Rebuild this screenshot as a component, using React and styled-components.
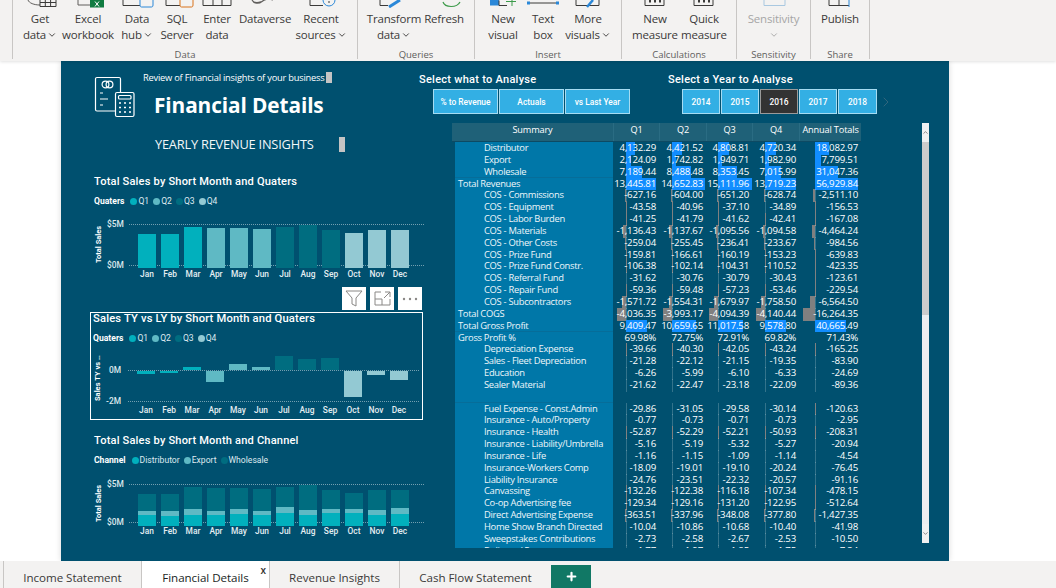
import React from "react"
import styled, { createGlobalStyle } from "styled-components"
import { ChevronDown, ChevronRight, ChevronUp, Plus } from "lucide-react"

const UI_FONT = `"Open Sans", "Noto Sans", "Liberation Sans", sans-serif`
const DIN_FONT = `Roboto, "Liberation Sans", sans-serif`

const GlobalStyle = createGlobalStyle`
  html, body { margin: 0; padding: 0; background: #fff; overflow: hidden; }
  body { font-family: ${UI_FONT}; }
  * { box-sizing: border-box; }
`

const Page = styled.div`
  width: 1056px;
  height: 588px;
  display: flex;
  flex-direction: column;
  overflow: hidden;
`

/* ribbon */
const Ribbon = styled.header`
  height: 61px;
  flex: none;
  display: flex;
  padding-left: 12px;
  background: #f3f2f1;
  box-shadow: 0 1px 3px rgba(0, 0, 0, 0.12);
  position: relative;
  z-index: 2;
`
const Group = styled.section`
  width: ${(p) => p.$w}px;
  height: 59px;
  flex: none;
  display: flex;
  flex-direction: column;
  border-right: 1px solid #c8c6c4;
  border-left: ${(p) => (p.$first ? "1px solid #c8c6c4" : "none")};
`
const Items = styled.div`
  flex: 1;
  display: flex;
  padding-left: ${(p) => p.$pad}px;
`
const Item = styled.div`
  width: ${(p) => p.$w}px;
  flex: none;
  display: flex;
  flex-direction: column;
  align-items: center;
  position: relative;
  padding-top: 11px;
  font-size: 11.5px;
  line-height: 16px;
  letter-spacing: -0.2px;
  white-space: nowrap;
  color: ${(p) => (p.$off ? "#a6a6a6" : "#3b3a39")};
  svg.chev { margin-left: 1px; vertical-align: -1px; }
`
const TopIcon = styled.svg`
  position: absolute;
  top: 0;
  left: 50%;
  transform: translateX(-50%);
`
const GroupLabel = styled.div`
  text-align: center;
  font-size: 9.5px;
  line-height: 12px;
  margin-bottom: -2px;
  color: #605e5c;
`

const Chev = () => <ChevronDown className="chev" size={10} strokeWidth={2.2} />

const Glyph = ({ kind }) => {
  const line = "#605e5c"
  return (
    <TopIcon width="34" height="8" viewBox="0 0 34 8" fill="none" stroke={line} strokeWidth="1">
      {kind === "get" && (<><path d="M5 0c1 3 6 5 12 5" /><path d="M17 0v6.500h16V0M17 2.500h16M22.300 0v6.500M27.600 0v6.500" stroke="#3b3a39" /></>)}
      {kind === "excel" && (<><path d="M7 0v5h12" /><rect x="19" y="0" width="14" height="7.500" fill="#107c41" stroke="none" /><path d="M24 1.500l4 5M28 1.500l-4 5" stroke="#fff" /></>)}
      {kind === "hub" && (<><path d="M3 5.500h17M3 0v5.500" stroke="#3b3a39" /><path d="M20 0v5c0 2 1 2 2 2h9c1 0 2 0 2-2V0" stroke="#2b88d8" /></>)}
      {kind === "sql" && (<><path d="M6 0v5.500h14" stroke="#3b3a39" /><path d="M20 0v5c0 2 1 2 2 2h9c1 0 2 0 2-2V0" stroke="#d9731a" /></>)}
      {kind === "enter" && (<path d="M3 0v5.500h28V0M13 0v5.500M22 0v5.500" stroke="#3b3a39" />)}
      {kind === "verse" && (<path d="M4 0c2 4 7 4 10 1.500s8-2.500 11-1.500M4 0c3 5 8 2 10 1.500" strokeWidth="1.200" />)}
      {kind === "recent" && (<><path d="M6 0v5.500h13" stroke="#3b3a39" /><circle cx="25" cy="0" r="6" stroke="#2b88d8" /><path d="M24 2h2" stroke="#3b3a39" /></>)}
      {kind === "transform" && (<><path d="M3 0v5.500h8" stroke="#3b3a39" /><path d="M12 7l11-7" stroke="#2b88d8" strokeWidth="3" /></>)}
      {kind === "refresh" && (<path d="M16 2c2 6 14 6 17 0" stroke="#3d9b4a" strokeWidth="1.200" />)}
      {kind === "visual" && (<><rect x="4" y="0" width="9" height="5.500" fill="#2b88d8" stroke="none" /><path d="M13 .500v5h8" stroke="#3b3a39" /><path d="M26 0v6M20 1.500h10" stroke="#3d9b4a" /></>)}
      {kind === "textbox" && (<><path d="M2 3h30" stroke="#3b3a39" /><rect x="1" y="1.500" width="3" height="3" fill="#2b88d8" stroke="none" /><rect x="30" y="1.500" width="3" height="3" fill="#2b88d8" stroke="none" /></>)}
      {kind === "more" && (<><path d="M5 0v5.500h23V0" stroke="#3b3a39" /><path d="M16 7l6-7" stroke="#2b88d8" strokeWidth="2.500" /></>)}
      {kind === "measure" && (<><path d="M7 0v5.500h19V0" stroke="#3b3a39" /><path d="M11 0h2v2.500h-2zM16 0h2v2.500h-2zM21 0h2v2.500h-2z" fill="#3b3a39" stroke="none" /></>)}
      {kind === "sens" && (<path d="M7 0v5.500h21V0" stroke="#a9c8e0" />)}
      {kind === "publish" && (<><path d="M6 0v5.500h20M16 0v5.500" stroke="#3b3a39" /><path d="M26 0v7" stroke="#2b88d8" /></>)}
    </TopIcon>
  )
}

const ribbon = [
  { label: "Data", w: 346, first: true, pad: 3, items: [
    { w: 48, a: "Get", b: "data", chev: 1, icon: "get" },
    { w: 48, a: "Excel", b: "workbook", icon: "excel" },
    { w: 50, a: "Data", b: "hub", chev: 1, icon: "hub" },
    { w: 30, a: "SQL", b: "Server", icon: "sql" },
    { w: 50, a: "Enter", b: "data", icon: "enter" },
    { w: 46, a: "Dataverse", icon: "verse" },
    { w: 66, a: "Recent", b: "sources", chev: 1, icon: "recent" },
  ] },
  { label: "Queries", w: 117, pad: 12, items: [
    { w: 48, a: "Transform", b: "data", chev: 1, icon: "transform" },
    { w: 52, a: "Refresh", icon: "refresh" },
  ] },
  { label: "Insert", w: 147, pad: 8, items: [
    { w: 40, a: "New", b: "visual", icon: "visual" },
    { w: 40, a: "Text", b: "box", icon: "textbox" },
    { w: 50, a: "More", b: "visuals", chev: 1, icon: "more" },
  ] },
  { label: "Calculations", w: 115, pad: 10, items: [
    { w: 46, a: "New", b: "measure", icon: "measure" },
    { w: 52, a: "Quick", b: "measure", icon: "measure" },
  ] },
  { label: "Sensitivity", w: 74, pad: 0, items: [
    { w: 73, a: "Sensitivity", off: 1, chevOnly: 1, icon: "sens" },
  ] },
  { label: "Share", w: 59, pad: 0, items: [{ w: 58, a: "Publish", icon: "publish" }] },
]

/* report canvas */
const Workspace = styled.main`
  flex: 1;
  display: flex;
  padding-left: 61px;
  background: #fff;
`
const Canvas = styled.div`
  width: 888px;
  height: 500px;
  flex: none;
  display: grid;
  grid-template-columns: 370px 1fr;
  background: #00506f;
  color: #fff;
  box-shadow: 0 0 6px rgba(0, 0, 0, 0.15);
`
const LeftCol = styled.div`
  display: flex;
  flex-direction: column;
  padding-left: 29px;
`
const Brand = styled.div`
  height: 62px;
  display: flex;
  padding: 15px 0 0 4px;
`
const BrandText = styled.div`
  margin: -5px 0 0 7px;
  display: flex;
  flex-direction: column;
`
const Tagline = styled.div`
  display: flex;
  align-items: center;
  gap: 2px;
  height: 12px;
  font-size: 9.3px;
  letter-spacing: -0.22px;
  white-space: nowrap;
`
const Marker = styled.span`
  width: ${(p) => p.$w}px;
  height: ${(p) => p.$h}px;
  background: #c4c4c4;
  flex: none;
`
const Title = styled.h1`
  margin: 7px 0 0 11px;
  font-size: 20.8px;
  line-height: 30px;
  font-weight: 700;
  letter-spacing: -0.1px;
  white-space: nowrap;
`
const Insights = styled.div`
  height: 40px;
  display: flex;
  align-items: center;
  padding-left: 65px;
  margin-top: 1px;
  gap: 25px;
  font-size: 12.8px;
  letter-spacing: -0.2px;
  color: #f2f7f9;
`
const ChartBlock = styled.div`
  height: ${(p) => p.$h}px;
  flex: none;
  display: flex;
  flex-direction: column;
  padding: ${(p) => p.$pt}px 0 0 ${(p) => (p.$framed ? 2 : 4)}px;
  width: ${(p) => (p.$framed ? "333px" : "auto")};
  border: ${(p) => (p.$framed ? "1.5px solid #fff" : "none")};
`
const ChartTitle = styled.div`
  font-family: ${DIN_FONT};
  font-size: ${(p) => (p.$big ? 11.2 : 11.1)}px;
  font-weight: 500;
  line-height: 14px;
  letter-spacing: 0.17px;
  white-space: nowrap;
  margin-top: ${(p) => (p.$big ? "-1px" : "0")};
`
const Legend = styled.div`
  display: flex;
  align-items: center;
  margin-top: 6px;
  height: 12px;
  font-family: ${DIN_FONT};
  font-size: 8.6px;
  color: #dfeaef;
`
const LegendName = styled.span`
  font-weight: 700;
  color: #fff;
  margin-right: 6px;
`
const LegendItem = styled.span`
  display: flex;
  align-items: center;
  margin-right: 4px;
  &::before {
    content: "";
    width: 7px;
    height: 7px;
    border-radius: 50%;
    margin-right: 1px;
    background: ${(p) => p.$c};
  }
`
const Plot = styled.div`
  display: grid;
  grid-template-columns: 13px 22px 1fr;
  width: ${(p) => p.$w}px;
  margin-top: ${(p) => p.$mt}px;
`
const AxisName = styled.div`
  grid-row: 1;
  height: ${(p) => p.$h}px;
  writing-mode: vertical-rl;
  transform: rotate(180deg);
  text-align: center;
  font-family: ${DIN_FONT};
  font-size: 7.5px;
  font-weight: 700;
  white-space: nowrap;
  overflow: hidden;
`
const AxisTicks = styled.div`
  grid-row: 1;
  height: ${(p) => p.$h}px;
  margin-top: ${(p) => p.$mt || 0}px;
  display: flex;
  flex-direction: column;
  justify-content: space-between;
  font-family: ${DIN_FONT};
  font-size: 8.4px;
  font-weight: 500;
  color: #dce8ed;
  line-height: 0;
  text-align: right;
  padding-right: 7px;
`
const Bars = styled.div`
  grid-row: 1;
  height: ${(p) => p.$h}px;
  position: relative;
  display: grid;
  grid-template-columns: repeat(12, 23px);
  padding-left: 9px;
  border-top: ${(p) => (p.$noTop ? "none" : "1px dotted rgba(255, 255, 255, 0.45)")};
  border-bottom: 1px dotted rgba(255, 255, 255, 0.45);
`
const Slot = styled.div`
  width: 18px;
  position: relative;
  display: flex;
  flex-direction: column;
  justify-content: flex-end;
`
const Seg = styled.div`
  flex: none;
  background: ${(p) => p.$c};
`
const FloatBar = styled.div`
  position: absolute;
  left: 0;
  right: 0;
  background: ${(p) => p.$c};
`
const ZeroLine = styled.div`
  position: absolute;
  left: 0;
  right: 0;
  top: ${(p) => p.$top}px;
  border-top: 1px dotted rgba(255, 255, 255, 0.45);
`
const Months = styled.div`
  grid-column: 3;
  display: grid;
  grid-template-columns: repeat(12, 23px);
  padding-left: 8px;
  margin-top: 3px;
  font-family: ${DIN_FONT};
  font-size: 8.4px;
  font-weight: 500;
  color: #e4eef2;
  line-height: 10px;
  span { width: 20px; text-align: center; }
`
const VisualTools = styled.div`
  height: 25px;
  flex: none;
  display: flex;
  justify-content: flex-end;
  gap: 4px;
  padding-right: 1px;
  width: 333px;
`
const ToolBtn = styled.div`
  width: 24px;
  height: 23px;
  background: #fff;
  display: grid;
  place-items: center;
`
const RightCol = styled.div`
  display: flex;
  flex-direction: column;
  min-width: 0;
`
const Slicers = styled.div`
  height: 62px;
  display: flex;
`
const Slicer = styled.div`
  width: ${(p) => p.$w}px;
  padding-top: 11px;
  flex: none;
`
const SlicerTitle = styled.div`
  font-family: ${DIN_FONT};
  font-size: 11px;
  font-weight: 500;
  line-height: 14px;
  letter-spacing: 0.27px;
  white-space: nowrap;
  margin: 1px 0 0 ${(p) => p.$ml || 0}px;
`
const Buttons = styled.div`
  display: flex;
  align-items: center;
  gap: 1px;
  margin: 2px 0 0 ${(p) => p.$ml}px;
`
const Btn = styled.div`
  width: ${(p) => p.$w}px;
  height: 25px;
  flex: none;
  display: grid;
  place-items: center;
  font-family: ${DIN_FONT};
  font-weight: 500;
  font-size: 8.4px;
  color: #fff;
  background: ${(p) => (p.$on ? "#333333" : "#33afe4")};
  border: 1px solid ${(p) => (p.$on ? "#9a9a9a" : "#a6dcf2")};
`
const MatrixRow = styled.div`
  display: flex;
  align-items: flex-start;
  padding-left: 21px;
`
const Matrix = styled.div`
  width: 409px;
  flex: none;
`
const MatrixHead = styled.div`
  height: 19px;
  display: grid;
  grid-template-columns: 161px 46px 47px 46px 47px 62px;
  background: #1f6178;
  border-bottom: 1px solid #0d4a63;
  font-size: 9.2px;
  font-weight: 500;
  letter-spacing: -0.15px;
  text-align: center;
  span { line-height: 14px; }
  span + span { border-left: 1px solid #2a6c83; height: 18px; }
`
const MatrixBody = styled.div`
  margin-left: 3px;
  height: 406px;
  overflow: hidden;
  position: relative;
`
const Row = styled.div`
  height: 11.85px;
  display: grid;
  grid-template-columns: 158px 46px 47px 46px 47px 62px;
  font-size: 9.7px;
  letter-spacing: -0.22px;
  line-height: 11.8px;
  white-space: nowrap;
`
const RowLabel = styled.div`
  background: #0077a8;
  border-bottom: 1px solid #066d99;
  padding-left: ${(p) => (p.$indent ? 29 : 3)}px;
  font-size: 9.4px;
  letter-spacing: -0.3px;
  color: #eef6fa;
`
const Cell = styled.div`
  position: relative;
  text-align: right;
  padding-right: 3px;
`
const CellText = styled.span`
  position: relative;
`
const DataBar = styled.i`
  position: absolute;
  top: 0;
  bottom: 0;
  left: ${(p) => p.$base}px;
  background: ${(p) => (p.$neg ? "#808080" : "#118dff")};
`
const BaseTick = styled.i`
  position: absolute;
  top: 0;
  bottom: 0;
  width: 1px;
  left: ${(p) => p.$base}px;
  background: rgba(255, 255, 255, 0.2);
`
const ScrollBar = styled.div`
  width: 7px;
  height: 420px;
  flex: none;
  margin-left: 61px;
  display: flex;
  flex-direction: column;
  background: #eceef0;
  color: #444;
`
const ScrollBtn = styled.div`
  height: 19px;
  flex: none;
  display: grid;
  place-items: center;
  background: #f0f1f2;
`
const ScrollThumb = styled.div`
  height: 173px;
  flex: none;
  background: #cccccc;
`
const ScrollRest = styled.div`
  flex: 1;
`

/* tabs */
const TabBar = styled.nav`
  height: 27px;
  flex: none;
  display: flex;
  padding-left: 3px;
  background: #f3f2f1;
`
const Tab = styled.div`
  width: ${(p) => p.$w}px;
  display: flex;
  align-items: flex-end;
  justify-content: center;
  padding-bottom: 2px;
  position: relative;
  font-size: 11.6px;
  line-height: 17px;
  letter-spacing: -0.05px;
  color: ${(p) => (p.$on ? "#201f1e" : "#3b3a39")};
  background: ${(p) => (p.$on ? "#fff" : "transparent")};
  border-left: 1px solid #c8c6c4;
`
const TabClose = styled.span`
  position: absolute;
  top: 4px;
  right: 3px;
  font-size: 10px;
  line-height: 10px;
  font-weight: 600;
  color: #323130;
`
const AddTab = styled.div`
  width: 40px;
  margin-top: 4px;
  background: #117865;
  display: grid;
  place-items: center;
  color: #fff;
`

const Q1 = "#01b0bd"
const Q2 = "#5fb9c4"
const Q3 = "#006d80"
const Q4 = "#93c9d3"
const MONTHS = ["Jan", "Feb", "Mar", "Apr", "May", "Jun", "Jul", "Aug", "Sep", "Oct", "Nov", "Dec"]
const quarterColor = (i) => [Q1, Q2, Q3, Q4][Math.floor(i / 3)]

const salesHeights = [34.3, 34, 41.3, 40.7, 40, 39, 41, 43.3, 38.7, 35.3, 38.3, 38.3]
const diffHeights = [-2.5, -2, 2.7, -10.7, 6, 2.7, 14.3, 10.7, 12.3, -26.3, -4, -9.3]
// wholesale top, export top, distributor top, all as px above the axis
const channelHeights = [
  [32, 15, 10.6], [31.6, 14.3, 10], [38.6, 17, 10.6], [38, 15, 10.6], [37.3, 16.6, 11.6], [36.3, 14.6, 10.6],
  [38.3, 18.6, 12.3], [40.6, 16, 11], [36, 16.3, 12.6], [32.6, 16.3, 12.6], [36, 15.6, 10.3], [36, 18, 12],
]

const Months12 = () => (
  <Months>{MONTHS.map((m) => <span key={m}>{m}</span>)}</Months>
)

const QuarterLegend = () => (
  <Legend>
    <LegendName>Quaters</LegendName>
    <LegendItem $c={Q1}>Q1</LegendItem>
    <LegendItem $c={Q2}>Q2</LegendItem>
    <LegendItem $c={Q3}>Q3</LegendItem>
    <LegendItem $c={Q4}>Q4</LegendItem>
  </Legend>
)

const Logo = () => (
  <svg width="42" height="42" viewBox="0 0 42 42" fill="none" stroke="#fff" strokeWidth="1.2">
    <path d="M21 35H3a1.500 1.500 0 0 1-1.500-1.500V3A1.500 1.500 0 0 1 3 1.500h22A1.500 1.500 0 0 1 26.500 3v13" />
    <circle cx="11.500" cy="8.500" r="3.400" />
    <circle cx="15.500" cy="8.500" r="3.400" />
    <path d="M6 17h3M6 23h8M6 29h3" />
    <rect x="21.500" y="16.500" width="18.500" height="24" rx="1.500" />
    <rect x="24.500" y="19.500" width="12.500" height="3.500" rx="1" />
    <path d="M25 27h2M30 27h2M35 27h2M25 31.500h2M30 31.500h2M35 31.500h2M25 36h2M30 36h2M35 36h2" strokeWidth="1.600" />
  </svg>
)

const rows = [
  ["Distributor", 1, 4132.29, 4421.52, 4808.81, 4720.34, 18082.97],
  ["Export", 1, 2124.09, 1742.82, 1949.71, 1982.9, 7799.51],
  ["Wholesale", 1, 7189.44, 8488.48, 8353.45, 7015.99, 31047.36],
  ["Total Revenues", 0, 13445.81, 14652.83, 15111.96, 13719.23, 56929.84],
  ["COS - Commissions", 1, -627.16, -604, -651.2, -628.74, -2511.1],
  ["COS - Equipment", 1, -43.58, -40.96, -37.1, -34.89, -156.53],
  ["COS - Labor Burden", 1, -41.25, -41.79, -41.62, -42.41, -167.08],
  ["COS - Materials", 1, -1136.43, -1137.67, -1095.56, -1094.58, -4464.24],
  ["COS - Other Costs", 1, -259.04, -255.45, -236.41, -233.67, -984.56],
  ["COS - Prize Fund", 1, -159.81, -166.61, -160.19, -153.23, -639.83],
  ["COS - Prize Fund Constr.", 1, -106.38, -102.14, -104.31, -110.52, -423.35],
  ["COS - Referral Fund", 1, -31.62, -30.76, -30.79, -30.43, -123.61],
  ["COS - Repair Fund", 1, -59.36, -59.48, -57.23, -53.46, -229.54],
  ["COS - Subcontractors", 1, -1571.72, -1554.31, -1679.97, -1758.5, -6564.5],
  ["Total COGS", 0, -4036.35, -3993.17, -4094.39, -4140.44, -16264.35],
  ["Total Gross Profit", 0, 9409.47, 10659.65, 11017.58, 9578.8, 40665.49],
  ["Gross Profit %", 0, "69.98%", "72.75%", "72.91%", "69.82%", "71.43%"],
  ["Depreciation Expense", 1, -39.66, -40.3, -42.05, -43.24, -165.25],
  ["Sales - Fleet Depreciation", 1, -21.28, -22.12, -21.15, -19.35, -83.9],
  ["Education", 1, -6.26, -5.99, -6.1, -6.33, -24.69],
  ["Sealer Material", 1, -21.62, -22.47, -23.18, -22.09, -89.36],
  ["", 0],
  ["Fuel Expense - Const.Admin", 1, -29.86, -31.05, -29.58, -30.14, -120.63],
  ["Insurance - Auto/Property", 1, -0.77, -0.73, -0.71, -0.73, -2.95],
  ["Insurance - Health", 1, -52.87, -52.29, -52.21, -50.93, -208.31],
  ["Insurance - Liability/Umbrella", 1, -5.16, -5.19, -5.32, -5.27, -20.94],
  ["Insurance - Life", 1, -1.16, -1.15, -1.09, -1.14, -4.54],
  ["Insurance-Workers Comp", 1, -18.09, -19.01, -19.1, -20.24, -76.45],
  ["Liability Insurance", 1, -24.76, -23.51, -22.32, -20.57, -91.16],
  ["Canvassing", 1, -132.26, -122.38, -116.18, -107.34, -478.15],
  ["Co-op Advertising fee", 1, -129.34, -129.16, -131.2, -122.95, -512.64],
  ["Direct Advertising Expense", 1, -363.51, -337.96, -348.08, -377.8, -1427.35],
  ["Home Show Branch Directed", 1, -10.04, -10.86, -10.68, -10.4, -41.98],
  ["Sweepstakes Contributions", 1, -2.73, -2.58, -2.67, -2.53, -10.5],
  ["Delivery / Postage", 1, -1.77, -1.97, -1.85, -1.75, -7.34],
]

const bases = [13, 13, 12, 13, 16]
const fmt = (v) => v.toLocaleString("en-US", { minimumFractionDigits: 2, maximumFractionDigits: 2 })

const ValueCell = ({ v, col }) => {
  if (v === undefined) return <Cell />
  if (typeof v === "string") return <Cell><CellText>{v}</CellText></Cell>
  const base = bases[col]
  const w = Math.abs(v) * (col === 4 ? 0.000755 : 0.00223)
  return (
    <Cell>
      <BaseTick $base={base} />
      <DataBar $neg={v < 0} $base={v < 0 ? base - w : base} style={{ width: w }} />
      <CellText>{fmt(v)}</CellText>
    </Cell>
  )
}

export default function App() {
  return (
    <Page>
      <GlobalStyle />
      <Ribbon>
        {ribbon.map((g) => (
          <Group key={g.label} $w={g.w} $first={g.first}>
            <Items $pad={g.pad}>
              {g.items.map((it, i) => (
                <Item key={i} $w={it.w} $off={it.off}>
                  <Glyph kind={it.icon} />
                  <span>{it.a}</span>
                  {it.b && <span>{it.b}{it.chev && <Chev />}</span>}
                  {it.chevOnly && <span><Chev /></span>}
                </Item>
              ))}
            </Items>
            <GroupLabel>{g.label}</GroupLabel>
          </Group>
        ))}
      </Ribbon>

      <Workspace>
        <Canvas>
          <LeftCol>
            <Brand>
              <Logo />
              <BrandText>
                <Tagline>Review of Financial insights of your business<Marker $w={6} $h={11} /></Tagline>
                <Title>Financial Details</Title>
              </BrandText>
            </Brand>
            <Insights>YEARLY REVENUE INSIGHTS<Marker $w={6} $h={15} /></Insights>

            <ChartBlock $h={123} $pt={11}>
              <ChartTitle>Total Sales by Short Month and Quaters</ChartTitle>
              <QuarterLegend />
              <Plot $w={330} $mt={17}>
                <AxisName $h={41}>Total Sales</AxisName>
                <AxisTicks $h={41}><span>$5M</span><span>$0M</span></AxisTicks>
                <Bars $h={42}>
                  {salesHeights.map((h, i) => (
                    <Slot key={i}><Seg $c={quarterColor(i)} style={{ height: h }} /></Slot>
                  ))}
                </Bars>
                <Months12 />
              </Plot>
            </ChartBlock>

            <VisualTools>
              <ToolBtn>
                <svg width="18" height="17" viewBox="0 0 18 17" fill="none" stroke="#8a8886" strokeWidth="1"><path d="M1 1h16l-6 7v8l-4-2V8z" /></svg>
              </ToolBtn>
              <ToolBtn>
                <svg width="17" height="15" viewBox="0 0 17 15" fill="none" stroke="#8a8886" strokeWidth="1"><path d="M7 1H1v13h15V8M1 8h7v6M11 1h5v5M16 1l-6 6" /></svg>
              </ToolBtn>
              <ToolBtn>
                <svg width="16" height="4" viewBox="0 0 16 4" fill="#8a8886"><circle cx="2" cy="2" r="1.200" /><circle cx="8" cy="2" r="1.200" /><circle cx="14" cy="2" r="1.200" /></svg>
              </ToolBtn>
            </VisualTools>

            <ChartBlock $framed $h={108} $pt={0}>
              <ChartTitle $big>Sales TY vs LY by Short Month and Quaters</ChartTitle>
              <QuarterLegend />
              <Plot $w={326} $mt={11}>
                <AxisName $h={46}>Sales TY vs ...</AxisName>
                <AxisTicks $h={31} $mt={15}><span>0M</span><span>-2M</span></AxisTicks>
                <Bars $h={47} $noTop>
                  <ZeroLine $top={15} />
                  {diffHeights.map((h, i) => (
                    <Slot key={i}>
                      <FloatBar
                        $c={quarterColor(i)}
                        style={h > 0 ? { top: 15 - h, height: h } : { top: 16, height: -h }}
                      />
                    </Slot>
                  ))}
                </Bars>
                <Months12 />
              </Plot>
            </ChartBlock>

            <ChartBlock $h={120} $pt={14}>
              <ChartTitle>Total Sales by Short Month and Channel</ChartTitle>
              <Legend>
                <LegendName>Channel</LegendName>
                <LegendItem $c={Q1}>Distributor</LegendItem>
                <LegendItem $c={Q2}>Export</LegendItem>
                <LegendItem $c={Q3}>Wholesale</LegendItem>
              </Legend>
              <Plot $w={330} $mt={18}>
                <AxisName $h={38}>Total Sales</AxisName>
                <AxisTicks $h={38}><span>$5M</span><span>$0M</span></AxisTicks>
                <Bars $h={39}>
                  {channelHeights.map(([t, e, d], i) => (
                    <Slot key={i}>
                      <Seg $c={Q3} style={{ height: t - e }} />
                      <Seg $c={Q2} style={{ height: e - d }} />
                      <Seg $c={Q1} style={{ height: d }} />
                    </Slot>
                  ))}
                </Bars>
                <Months12 />
              </Plot>
            </ChartBlock>
          </LeftCol>

          <RightCol>
            <Slicers>
              <Slicer $w={237}>
                <SlicerTitle $ml={-12}>Select what to Analyse</SlicerTitle>
                <Buttons $ml={2}>
                  <Btn $w={65}>% to Revenue</Btn>
                  <Btn $w={65}>Actuals</Btn>
                  <Btn $w={65}>vs Last Year</Btn>
                </Buttons>
              </Slicer>
              <Slicer $w={240}>
                <SlicerTitle>Select a Year to Analyse</SlicerTitle>
                <Buttons $ml={14}>
                  <Btn $w={38}>2014</Btn>
                  <Btn $w={38}>2015</Btn>
                  <Btn $w={38} $on>2016</Btn>
                  <Btn $w={38}>2017</Btn>
                  <Btn $w={39}>2018</Btn>
                  <ChevronRight size={16} strokeWidth={1.2} color="#3d6b80" />
                </Buttons>
              </Slicer>
            </Slicers>
            <MatrixRow>
              <Matrix>
                <MatrixHead>
                  <span>Summary</span><span>Q1</span><span>Q2</span><span>Q3</span><span>Q4</span><span>Annual Totals</span>
                </MatrixHead>
                <MatrixBody>
                  {rows.map((r, i) => (
                    <Row key={i}>
                      <RowLabel $indent={r[1]}>{r[0]}</RowLabel>
                      {[0, 1, 2, 3, 4].map((c) => <ValueCell key={c} v={r[c + 2]} col={c} />)}
                    </Row>
                  ))}
                </MatrixBody>
              </Matrix>
              <ScrollBar>
                <ScrollBtn><ChevronUp size={7} strokeWidth={2} /></ScrollBtn>
                <ScrollThumb />
                <ScrollRest />
                <ScrollBtn><ChevronDown size={7} strokeWidth={2} /></ScrollBtn>
              </ScrollBar>
            </MatrixRow>
          </RightCol>
        </Canvas>
      </Workspace>

      <TabBar>
        <Tab $w={138}>Income Statement</Tab>
        <Tab $w={128} $on>
          Financial Details
          <TabClose>x</TabClose>
        </Tab>
        <Tab $w={130}>Revenue Insights</Tab>
        <Tab $w={152}>Cash Flow Statement</Tab>
        <AddTab><Plus size={13} strokeWidth={4} /></AddTab>
      </TabBar>
    </Page>
  )
}
